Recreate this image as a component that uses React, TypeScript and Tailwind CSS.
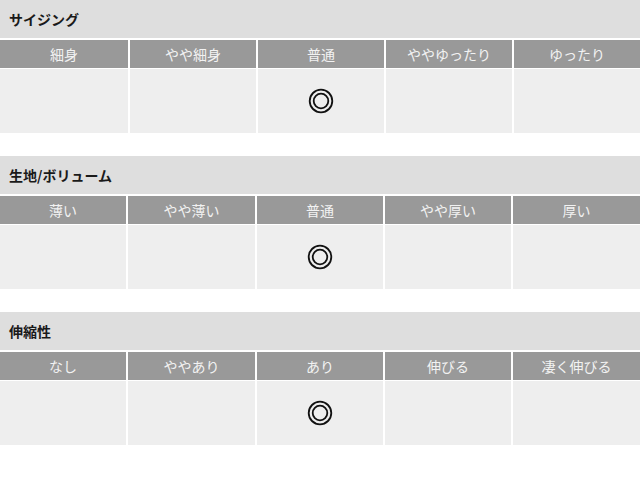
const sections = [
  {
    title: 'サイジング',
    cols: ['細身', 'やや細身', '普通', 'ややゆったり', 'ゆったり'],
    grid: 'grid-cols-[128px_126px_126px_126px_126px]',
    mark: 2,
  },
  {
    title: '生地/ボリューム',
    cols: ['薄い', 'やや薄い', '普通', 'やや厚い', '厚い'],
    grid: 'grid-cols-[126px_127px_126px_126px_127px]',
    mark: 2,
  },
  {
    title: '伸縮性',
    cols: ['なし', 'ややあり', 'あり', '伸びる', '凄く伸びる'],
    grid: 'grid-cols-[126px_127px_126px_126px_127px]',
    mark: 2,
  },
]

function Mark() {
  return (
    <svg width="26" height="26" viewBox="0 0 26 26" className="block">
      <circle cx="13" cy="13" r="11.3" fill="none" stroke="#111" strokeWidth="1.8" />
      <circle cx="13" cy="13" r="7.3" fill="none" stroke="#111" strokeWidth="1.8" />
    </svg>
  )
}

export default function App() {
  return (
    <div className="w-[640px] h-[492px] bg-white font-['Noto_Sans_CJK_JP','Noto_Sans',sans-serif]">
      {sections.map((s) => (
        <section key={s.title} className="mb-[23px]">
          <h2 className="h-[38px] bg-[#dedede] px-[9px] flex items-center text-[14px] font-bold text-[#1a1a1a] mb-[2px]">
            {s.title}
          </h2>
          <div className={`grid ${s.grid} gap-x-[2px] gap-y-[1px]`}>
            {s.cols.map((c) => (
              <div key={c} className="h-[28px] bg-[#999999] flex items-center justify-center text-[14px] text-[#f2f2f2]">
                {c}
              </div>
            ))}
            {s.cols.map((c, i) => (
              <div key={c + 'b'} className="h-[64px] bg-[#eeeeee] flex items-center justify-center">
                {i === s.mark ? <Mark /> : null}
              </div>
            ))}
          </div>
        </section>
      ))}
    </div>
  )
}
